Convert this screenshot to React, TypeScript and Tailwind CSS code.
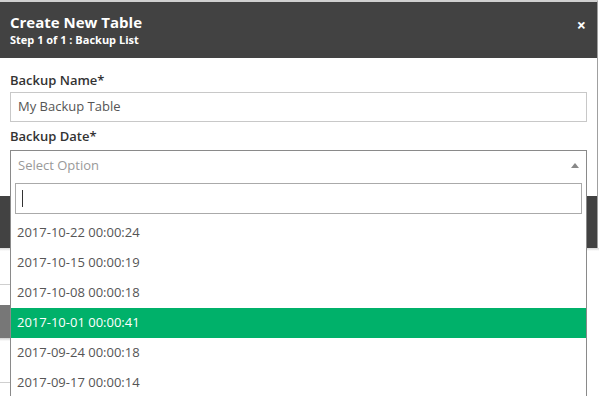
import React from "react";

const options = [
  "2017-10-22 00:00:24",
  "2017-10-15 00:00:19",
  "2017-10-08 00:00:18",
  "2017-10-01 00:00:41",
  "2017-09-24 00:00:18",
  "2017-09-17 00:00:14",
];

export default function App() {
  return (
    <div
      className="w-[599px] h-[396px] overflow-hidden bg-white relative"
      style={{ fontFamily: '"Open Sans", "Noto Sans", sans-serif' }}
    >
      <div className="w-[598px] border-r border-[#a0a0a0] border-t-2 border-t-[#d0d0d0]">
        {/* header */}
        <div className="h-[56px] bg-[#424242] flex items-center justify-between pl-[10px] pr-[11px]">
          <div className="flex flex-col text-white">
            <span className="text-[15px] font-bold leading-[20px]">Create New Table</span>
            <span className="text-[11px] font-bold leading-[16px]">Step 1 of 1 : Backup List</span>
          </div>
          <span className="text-white text-[16px] font-bold leading-none mb-[10px]">×</span>
        </div>
        {/* body */}
        <div className="px-[10px] pt-[12px] pb-[16px]">
          <div className="text-[13px] font-semibold text-[#333] leading-[20px]">Backup Name*</div>
          <div className="mt-[2px] h-[30px] border border-[#c8c8c8] flex items-center px-[7px] text-[13px] text-[#555]">
            My Backup Table
          </div>
          <div className="mt-[4px] text-[13px] font-semibold text-[#333] leading-[20px]">Backup Date*</div>
          <div className="relative mt-[4px] h-[30px] border border-[#8a8a8a] border-b-0 flex items-center justify-between px-[7px] text-[13px] text-[#999]">
            <span>Select Option</span>
            <svg width="8" height="5" viewBox="0 0 8 5">
              <polygon points="0,5 4,0 8,5" fill="#888" />
            </svg>
            <div className="absolute left-[-1px] right-[-1px] top-full bg-white border-x border-[#8a8a8a] z-10">
              <div className="px-[4px] pt-[3px] pb-[4px]">
                <div className="h-[31px] border border-[#aaa] flex items-center px-[6px]">
                  <div className="w-px h-[17px] bg-[#333]" />
                </div>
              </div>
              {options.map((o, i) => (
                <div
                  key={o}
                  className={
                    i === 3
                      ? "h-[30px] flex items-center px-[6px] text-[13px] bg-[#00b16a] text-white"
                      : "h-[30px] flex items-center px-[6px] text-[13px] text-[#555]"
                  }
                >
                  {o}
                </div>
              ))}
            </div>
          </div>
        </div>
        {/* footer */}
        <div className="h-[52px] bg-[#424242]" />
      </div>
      {/* background content below */}
      <div className="h-[3px] bg-gradient-to-b from-[#d8d8d8] to-white" />
      <div className="w-[20px] mt-[33px] border-t border-[#cfcfcf]" />
      <div className="w-[20px] mt-[20px] h-[33px] bg-[#777]" />
      <div className="w-[20px] h-[3px] bg-gradient-to-b from-[#d0d0d0] to-white" />
      <div className="w-[20px] mt-[41px] border-t border-[#cfcfcf]" />
    </div>
  );
}
